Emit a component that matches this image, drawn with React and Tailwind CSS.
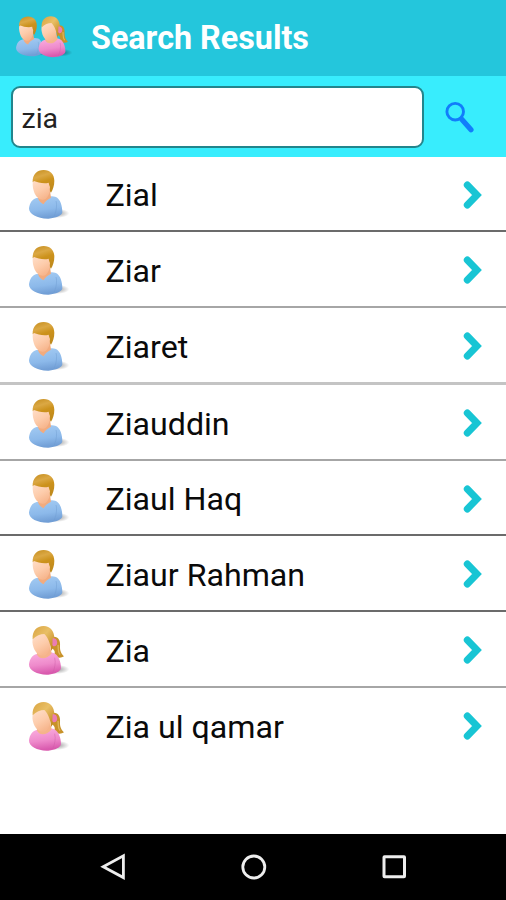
import clsx from "clsx";

const results = [
  { name: "Zial", gender: "male", line: "h-[75px] border-[#6b6b6b]" },
  { name: "Ziar", gender: "male", line: "h-[76px] border-[#a6a6a6]" },
  { name: "Ziaret", gender: "male", line: "h-[77px] border-b-3 border-[#c4c4c4]" },
  { name: "Ziauddin", gender: "male", line: "h-[76px] border-[#a6a6a6]" },
  { name: "Ziaul Haq", gender: "male", line: "h-[75px] border-[#6b6b6b]" },
  { name: "Ziaur Rahman", gender: "male", line: "h-[76px] border-[#6b6b6b]" },
  { name: "Zia", gender: "female", line: "h-[76px] border-[#a6a6a6]" },
  { name: "Zia ul qamar", gender: "female", line: "h-[76px] border-transparent" },
];

function AvatarDefs() {
  return (
    <svg width="0" height="0" className="absolute" aria-hidden="true">
      <defs>
        <linearGradient id="hair" x1="0" y1="0" x2="0.3" y2="1">
          <stop offset="0" stopColor="#c48c1c" />
          <stop offset="0.35" stopColor="#dba844" />
          <stop offset="0.6" stopColor="#cc921c" />
          <stop offset="1" stopColor="#c08a1c" />
        </linearGradient>
        <linearGradient id="blonde" x1="0" y1="0" x2="1" y2="1">
          <stop offset="0" stopColor="#d9a440" />
          <stop offset="0.45" stopColor="#e9bf66" />
          <stop offset="1" stopColor="#bb7f12" />
        </linearGradient>
        <linearGradient id="skin" x1="0" y1="0" x2="0.5" y2="1">
          <stop offset="0" stopColor="#ffe0cc" />
          <stop offset="0.6" stopColor="#fdccab" />
          <stop offset="1" stopColor="#f7b78f" />
        </linearGradient>
        <linearGradient id="blue" x1="0" y1="0" x2="0.2" y2="1">
          <stop offset="0" stopColor="#a5ccf3" />
          <stop offset="0.65" stopColor="#8cb9ea" />
          <stop offset="1" stopColor="#729fd6" />
        </linearGradient>
        <linearGradient id="pink" x1="0" y1="0" x2="0.2" y2="1">
          <stop offset="0" stopColor="#fbb0e0" />
          <stop offset="0.6" stopColor="#ee8acb" />
          <stop offset="1" stopColor="#d95aae" />
        </linearGradient>
        <radialGradient id="shadow">
          <stop offset="0" stopColor="#000" stopOpacity="0.4" />
          <stop offset="1" stopColor="#000" stopOpacity="0" />
        </radialGradient>
      </defs>
    </svg>
  );
}

function Male() {
  return (
    <g>
      <ellipse cx="110" cy="145" rx="38" ry="14" fill="url(#shadow)" />
      <path
        d="M50 99 C37 102 30 112 27 130 C26 148 54 162 86 161 C108 159 126 152 127 142 C127 122 121 103 108 96 C98 92 88 94 80 96 Z"
        fill="url(#blue)"
      />
      <path
        d="M108 108 C112 122 108 143 101 156"
        fill="none"
        stroke="#6d9bd0"
        strokeWidth="2.5"
        opacity="0.5"
      />
      <path d="M58 90 L54 100 C57 110 66 116 71 118 C74 110 82 104 93 98 L89 70 Z" fill="#f2ab7e" />
      <path
        d="M40 42 L88 42 C94 68 90 92 77 101 C66 109 48 100 42 80 C37 66 37 52 40 42 Z"
        fill="url(#skin)"
      />
      <path
        d="M38 52 C37 28 51 15 71 15 C91 15 103 28 103 47 C103 61 99 73 93 83 C89 80 89 73 90 66 C88 62 87 58 86 53 C71 57 53 52 42 48 Z"
        fill="url(#hair)"
      />
    </g>
  );
}

function Female() {
  return (
    <g>
      <ellipse cx="110" cy="145" rx="38" ry="14" fill="url(#shadow)" />
      <path
        d="M94 48 C113 43 122 56 120 75 C119 90 125 100 132 106 C124 112 111 111 101 105 C107 95 105 86 94 82 Z"
        fill="#c8922a"
      />
      <path d="M114 72 C116 82 112 90 120 101" fill="none" stroke="#e0b65c" strokeWidth="4" />
      <path
        d="M50 99 C37 102 29 114 27 130 C26 149 56 163 85 161 C106 159 122 151 123 141 C123 122 116 105 105 98 C97 93 88 95 80 97 Z"
        fill="url(#pink)"
      />
      <path
        d="M104 110 C108 125 104 144 98 156"
        fill="none"
        stroke="#c95ba3"
        strokeWidth="2.5"
        opacity="0.5"
      />
      <path d="M50 99 C56 116 80 117 95 97 L90 74 L58 86 Z" fill="#f5b48a" />
      <path
        d="M39 50 C50 35 76 34 88 46 C95 68 90 92 77 101 C65 109 48 100 41 80 C37 68 36 58 39 50 Z"
        fill="url(#skin)"
      />
      <path
        d="M38 55 C36 30 50 15 71 15 C91 15 103 31 103 51 C103 67 100 79 94 90 C92 74 87 53 73 39 C62 39 48 44 38 55 Z"
        fill="url(#blonde)"
      />
      <path d="M98 52 C108 50 113 60 111 69 C108 77 99 78 97 71 Z" fill="#ea7db4" />
    </g>
  );
}

function Avatar({ gender }) {
  return (
    <svg viewBox="0 0 165 180" className="mt-[3px] h-[60px] w-[55px] shrink-0">
      {gender === "male" ? <Male /> : <Female />}
    </svg>
  );
}

function Header() {
  return (
    <header className="flex h-[76px] items-center bg-[#24c6dc] pl-3">
      <svg viewBox="0 0 180 168" className="-mt-1 h-14 w-[60px] shrink-0">
        <g transform="translate(-10 13) scale(0.82)">
          <Male />
        </g>
        <g transform="translate(57 12) scale(0.84)">
          <Female />
        </g>
      </svg>
      <h1 className="ml-[19px] pt-px text-[32.3px] leading-none font-bold text-white">
        Search Results
      </h1>
    </header>
  );
}

function SearchBar() {
  return (
    <div className="flex h-[81px] items-start bg-[#38edfd] pt-[10px] pl-[11px]">
      <input
        type="text"
        defaultValue="zia"
        className="h-[62px] w-[413px] rounded-[9px] border-2 border-[#23858c] bg-white px-[8.5px] pt-[3px] text-[28.5px] text-[#222] outline-none"
      />
      <button type="button" aria-label="Search" className="mt-[15px] ml-[20px]">
        <svg viewBox="0 0 32 34" className="h-[34px] w-8" fill="none" stroke="#117dfb">
          <circle cx="11.2" cy="10.7" r="8.3" strokeWidth="2.9" />
          <path d="M17.5 18 L27 28.7" strokeWidth="5.2" strokeLinecap="round" />
        </svg>
      </button>
    </div>
  );
}

function ResultRow({ name, gender, line }) {
  return (
    <li className={clsx("flex items-center border-b-2 pr-[23px] pl-5", line)}>
      <Avatar gender={gender} />
      <span className="ml-[30.5px] flex-1 pt-1 text-[32.15px] leading-none text-[#0a0a0a]">
        {name}
      </span>
      <svg
        viewBox="0 0 20 28"
        className="mt-[2px] h-7 w-5"
        fill="none"
        stroke="#18c5d4"
      >
        <path d="M4.3 4 L14 14 L4.3 24" strokeWidth="7" strokeLinecap="round" />
      </svg>
    </li>
  );
}

function NavBar() {
  return (
    <nav className="flex h-[66px] items-center justify-between bg-black pr-[98px] pl-[99px]">
      <svg viewBox="0 0 28 28" className="size-7" fill="none" stroke="#eee" strokeWidth="2.8">
        <path d="M4.2 13.7 L24.4 2.8 V24.6 Z" />
      </svg>
      <svg viewBox="0 0 28 28" className="size-7" fill="none" stroke="#eee" strokeWidth="2.8">
        <circle cx="13.8" cy="14" r="11" />
      </svg>
      <svg viewBox="0 0 28 28" className="size-7" fill="none" stroke="#eee" strokeWidth="3">
        <rect x="4" y="3.8" width="20.5" height="20" rx="0.5" />
      </svg>
    </nav>
  );
}

export default function App() {
  return (
    <div className="flex h-[900px] w-[506px] flex-col overflow-hidden bg-white font-['Roboto',sans-serif]">
      <AvatarDefs />
      <Header />
      <SearchBar />
      <ul className="flex-1">
        {results.map((r) => (
          <ResultRow key={r.name} {...r} />
        ))}
      </ul>
      <NavBar />
    </div>
  );
}
